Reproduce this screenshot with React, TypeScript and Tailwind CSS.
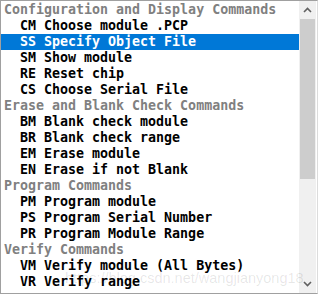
import React from 'react';

type Row = { text: string; header?: boolean };

const rows: Row[] = [
  { text: 'Configuration and Display Commands', header: true },
  { text: '  CM Choose module .PCP' },
  { text: '  SS Specify Object File' },
  { text: '  SM Show module' },
  { text: '  RE Reset chip' },
  { text: '  CS Choose Serial File' },
  { text: 'Erase and Blank Check Commands', header: true },
  { text: '  BM Blank check module' },
  { text: '  BR Blank check range' },
  { text: '  EM Erase module' },
  { text: '  EN Erase if not Blank' },
  { text: 'Program Commands', header: true },
  { text: '  PM Program module' },
  { text: '  PS Program Serial Number' },
  { text: '  PR Program Module Range' },
  { text: 'Verify Commands', header: true },
  { text: '  VM Verify module (All Bytes)' },
  { text: '  VR Verify range' },
];

const SELECTED = 2;

export default function App() {
  return (
    <div className="w-[318px] h-[295px] bg-white">
      <div className="relative flex h-[294px] border-t border-l border-b border-[#a0a0a0] border-r border-r-[#dcdcdc] overflow-hidden">
        <div className="w-[298px] pt-[1px] font-['DejaVu_Sans_Mono',monospace] text-[13.3px] font-bold">
          {rows.map((r, i) => (
            <div
              key={i}
              className={
                'h-4 leading-4 pl-[3px] whitespace-pre ' +
                (i === SELECTED
                  ? 'bg-[#0078d7] text-white'
                  : r.header
                  ? 'text-[#808080]'
                  : 'text-black')
              }
            >
              {r.text}
            </div>
          ))}
        </div>

        <div className="flex flex-col w-[17px] bg-[#f0f0f0]">
          <div className="h-[18px] flex items-center justify-center">
            <svg width="9" height="6" viewBox="0 0 9 6">
              <path d="M1 5 L4.5 1.5 L8 5" stroke="#606060" strokeWidth="1.6" fill="none" />
            </svg>
          </div>
          <div className="mx-[1px] h-[160px] bg-[#cdcdcd]" />
          <div className="flex-1" />
          <div className="h-[18px] flex items-center justify-center">
            <svg width="9" height="6" viewBox="0 0 9 6">
              <path d="M1 1 L4.5 4.5 L8 1" stroke="#606060" strokeWidth="1.6" fill="none" />
            </svg>
          </div>
        </div>

        {/* faint watermark lying over the list */}
        <div className="absolute left-[64px] top-[269px] font-['Liberation_Sans',Arial,sans-serif] text-[14.5px] leading-[17px] text-black/10 pointer-events-none whitespace-nowrap">
          https://blog.csdn.net/wangjianyong18
        </div>
      </div>
    </div>
  );
}
